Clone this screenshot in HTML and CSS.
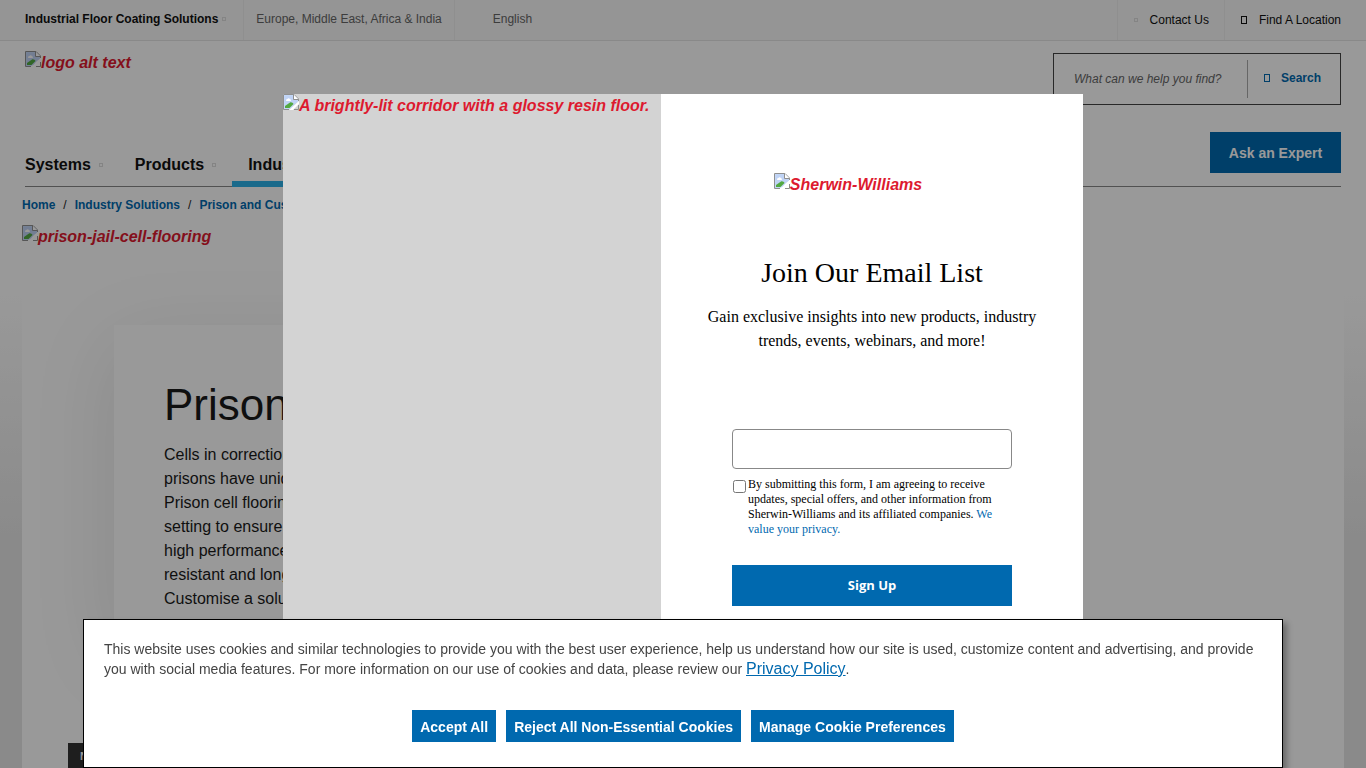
FILE: index.html
```html
<!DOCTYPE html>
<html lang="en">
<head>
  <meta charset="UTF-8">
  <meta name="viewport" content="width=device-width, initial-scale=1.0">
  <title>Prison and Custodial Flooring</title>
  <link rel="stylesheet" href="styles.css">
</head>
<body>
  <!-- Shared missing image icon -->
  <svg class="sprite" aria-hidden="true">
    <symbol id="missing-image" viewBox="0 0 16 16">
      <path d="M1 1H11L15 5V8L11 10L9 14L6 15H1Z" fill="#c3d7f7"/>
      <path d="M2 2H10V6H14V8L9 13H2Z" fill="#c0d3f5"/>
      <path d="M3 6.5C3 5.6 3.6 5 4.4 5C4.8 4 6.6 4 7 5.2C8 5.2 8.4 6.5 7.5 7H3.4Z" fill="#fff"/>
      <path d="M2 14V12L7 8.5C8.5 8 10 9 10.5 10L6.5 14Z" fill="#52a941"/>
      <path d="M0.5 15.5V0.5H11L15.5 5V7" fill="none" stroke="#8f8f8f"/>
      <path d="M10.5 0.5V5.5H15.5" fill="#fff" stroke="#8f8f8f"/>
      <path d="M0.5 15.5H6M11 15.5H15.5V11" fill="none" stroke="#8f8f8f"/>
      <path d="M6 16L16 7V10L10 16Z" fill="#fff"/>
    </symbol>
  </svg>

  <div class="topbar">
    <div class="topbar-group">
      <a href="#" class="topbar-item division">Industrial Floor Coating Solutions <i class="dot"></i></a>
      <a href="#" class="topbar-item region">Europe, Middle East, Africa &amp; India</a>
      <a href="#" class="topbar-item language">English</a>
    </div>
    <div class="topbar-group">
      <a href="#" class="topbar-item contact"><i class="dot"></i>Contact Us</a>
      <a href="#" class="topbar-item location"><i class="box"></i>Find A Location</a>
    </div>
  </div>

  <header class="header">
    <div class="header-row">
      <a href="#" class="alt-image logo"><svg><use href="#missing-image"/></svg>logo alt text</a>
      <form class="search">
        <input type="search" placeholder="What can we help you find?" aria-label="What can we help you find?">
        <button type="submit"><i class="box"></i>Search</button>
      </form>
    </div>
    <div class="nav-row">
      <nav class="nav">
        <a href="#">Systems <i class="dot"></i></a>
        <a href="#">Products <i class="dot"></i></a>
        <a href="#" class="active">Industry Solutions <i class="dot"></i></a>
      </nav>
      <a href="#" class="btn ask">Ask an Expert</a>
    </div>
  </header>

  <nav class="breadcrumb" aria-label="Breadcrumb">
    <a href="#">Home</a><span>/</span><a href="#">Industry Solutions</a><span>/</span><a href="#">Prison and Custodial</a>
  </nav>

  <main class="page">
    <div class="hero">
      <span class="alt-image"><svg><use href="#missing-image"/></svg>prison-jail-cell-flooring</span>
      <section class="card">
        <h1>Prison Flooring</h1>
        <p>
          Cells in correctional facilities<br>
          prisons have unique needs.<br>
          Prison cell flooring must suit the<br>
          setting to ensure safety and<br>
          high performance that is<br>
          resistant and long-lasting.<br>
          Customise a solution.
        </p>
      </section>
    </div>
  </main>

  <button class="side-tab" type="button">N</button>

  <div class="overlay">
    <div class="modal" role="dialog" aria-labelledby="modal-title">
      <div class="modal-picture">
        <span class="alt-image"><svg><use href="#missing-image"/></svg>A brightly-lit corridor with a glossy resin floor.</span>
      </div>
      <form class="modal-form">
        <span class="alt-image"><svg><use href="#missing-image"/></svg>Sherwin-Williams</span>
        <h2 id="modal-title">Join Our Email List</h2>
        <p>Gain exclusive insights into new products, industry trends, events, webinars, and more!</p>
        <div class="fields">
          <input type="email" class="email" aria-label="Email">
          <div class="consent">
            <input type="checkbox" id="consent">
            <label for="consent">By submitting this form, I am agreeing to receive updates, special offers, and other information from Sherwin-Williams and its affiliated companies. <a href="#">We value your privacy.</a></label>
          </div>
          <button type="submit" class="btn signup">Sign Up</button>
        </div>
      </form>
    </div>
  </div>

  <div class="cookies" role="region" aria-label="Cookies">
    <p>This website uses cookies and similar technologies to provide you with the best user experience, help us understand how our site is used, customize content and advertising, and provide you with social media features. For more information on our use of cookies and data, please review our <a href="#">Privacy Policy</a>.</p>
    <div class="cookie-buttons">
      <button type="button" class="btn">Accept All</button>
      <button type="button" class="btn">Reject All Non-Essential Cookies</button>
      <button type="button" class="btn">Manage Cookie Preferences</button>
    </div>
  </div>
</body>
</html>
```
FILE: styles.css
```css
:root {
  --blue: #0069af;
  --light-blue: #2cb1e8;
  --red: #dd1a2f;
  --text: #1a1a1a;
}

* {
  box-sizing: border-box;
}

body {
  margin: 0;
  height: 100vh;
  overflow: hidden;
  display: flex;
  flex-direction: column;
  font-family: "Liberation Sans", Arial, sans-serif;
  font-size: 16px;
  color: var(--text);
  background: #fff;
}

a {
  color: var(--blue);
  text-decoration: none;
}

button,
input {
  font-family: inherit;
}

.sprite {
  position: absolute;
  width: 0;
  height: 0;
}

.alt-image {
  display: flex;
  align-items: flex-start;
  color: var(--red);
  font-weight: 700;
  font-style: italic;
  line-height: 24px;
}

.alt-image svg {
  width: 16px;
  height: 16px;
  flex: none;
}

.btn {
  border: 0;
  background: var(--blue);
  color: #fff;
  font-size: 14px;
  font-weight: 700;
  text-align: center;
  cursor: pointer;
}

/* small markers beside links */
.dot,
.box {
  display: inline-block;
  width: 4px;
  height: 4px;
  border: 1px solid #ddd;
}

.box {
  width: 6px;
  height: 8px;
  border-color: currentColor;
}

/* top bar */
.topbar {
  display: flex;
  justify-content: space-between;
  height: 41px;
  flex: none;
  background: #f8f8f8;
  border-bottom: 1px solid #e4e4e4;
  font-size: 12px;
}

.topbar-group {
  display: flex;
}

.topbar-item {
  display: flex;
  align-items: center;
  color: #111;
  padding: 0 12px;
  border-right: 1px solid #eee;
}

.topbar-group:first-child .topbar-item {
  padding-bottom: 3px;
}

.topbar .division {
  font-weight: 700;
  gap: 4px;
  padding-left: 25px;
  padding-right: 17px;
}

.topbar .region,
.topbar .language {
  color: #666;
}

.topbar .language {
  padding-left: 38px;
  border: 0;
}

.topbar .contact {
  gap: 12px;
  padding: 0 15px 0 16px;
  border-left: 1px solid #eee;
}

.topbar .location {
  gap: 12px;
  padding: 0 25px 0 16px;
  border: 0;
}

/* header */
.header {
  padding: 10px 25px 0;
  flex: none;
}

.header-row,
.nav-row {
  display: flex;
  justify-content: space-between;
}

.search {
  display: flex;
  align-items: center;
  width: 288px;
  height: 52px;
  margin-top: 2px;
  border: 1px solid #444;
}

.search input {
  flex: 1;
  min-width: 0;
  height: 38px;
  padding: 0 0 0 20px;
  border: 0;
  border-right: 1px solid #aaa;
  background: none;
  font-size: 12px;
  font-style: italic;
}

.search input::placeholder {
  color: #666;
}

.search button {
  display: flex;
  align-items: center;
  gap: 11px;
  width: 92px;
  height: 38px;
  padding: 0 0 2px 16px;
  border: 0;
  background: none;
  color: var(--blue);
  font-size: 12px;
  font-weight: 700;
}

.nav-row {
  margin-top: 27px;
  height: 55px;
  border-bottom: 1px solid #888;
}

.nav {
  display: flex;
}

.nav a {
  display: flex;
  align-items: center;
  gap: 8px;
  height: 55px;
  padding: 16px 16px 0;
  border-bottom: 6px solid transparent;
  color: #111;
  font-weight: 700;
}

.nav a:first-child {
  padding-left: 0;
}

.nav a.active {
  border-color: var(--light-blue);
}

.ask {
  width: 131px;
  height: 41px;
  line-height: 42px;
}

.breadcrumb {
  display: flex;
  gap: 8px;
  flex: none;
  padding: 10px 22px 12px;
  font-size: 12px;
  line-height: 16px;
}

.breadcrumb a {
  font-weight: 700;
}

/* page */
.page {
  flex: 1;
  min-height: 0;
  padding: 0 22px;
  background: linear-gradient(#fff 70px, #e6e6e6 320px);
}

.hero {
  height: 100%;
  overflow: hidden;
  background: #fff;
}

.card {
  width: 660px;
  margin: 76px 0 0 92px;
  padding: 52px 50px 30px;
  background: #fff;
  box-shadow: 0 20px 80px rgba(0, 0, 0, 0.1);
}

.card h1 {
  margin: 0 0 11px;
  font-size: 44px;
  font-weight: 400;
  line-height: 55px;
}

.card p {
  margin: 0;
  line-height: 24px;
}

.side-tab {
  position: fixed;
  left: 68px;
  bottom: 0;
  width: 160px;
  height: 25px;
  padding: 0 12px;
  border: 0;
  background: #333;
  color: #fff;
  font-size: 11px;
  font-weight: 700;
  text-align: left;
}

/* email popup */
.overlay {
  position: fixed;
  inset: 0;
  display: flex;
  align-items: center;
  justify-content: center;
  background: rgba(0, 0, 0, 0.4);
}

.modal {
  display: flex;
  width: 800px;
  height: 580px;
  background: #fff;
}

.modal-picture {
  width: 378px;
  background: #d3d3d3;
}

.modal-form {
  flex: 1;
  display: flex;
  flex-direction: column;
  align-items: center;
  padding: 79px 40px 0;
  font-family: "Liberation Serif", "Times New Roman", serif;
  color: #000;
}

.modal-form .alt-image {
  font-family: "Liberation Sans", Arial, sans-serif;
  padding-right: 48px;
}

.modal-form h2 {
  margin: 58px 0 14px;
  font-size: 28px;
  font-weight: 400;
  line-height: 36px;
}

.modal-form p {
  margin: 0;
  line-height: 24px;
  text-align: center;
}

.fields {
  display: flex;
  flex-direction: column;
  width: 280px;
  margin-top: 76px;
}

.email {
  height: 40px;
  padding: 0 12px;
  border: 1px solid #888;
  border-radius: 4px;
}

.consent {
  display: flex;
  align-items: flex-start;
  gap: 2px;
  margin-top: 8px;
  font-size: 12px;
  line-height: 15px;
}

.consent input {
  flex: none;
  width: 13px;
  height: 13px;
  margin: 3px 0 0 1px;
}

.signup {
  height: 41px;
  margin-top: 28px;
  padding: 0 0 2px;
  font-family: "Open Sans", sans-serif;
  font-size: 13px;
}

/* cookie notice */
.cookies {
  position: fixed;
  left: 0;
  right: 0;
  bottom: 0;
  max-width: 1200px;
  margin: 0 auto;
  padding: 19px 20px 25px;
  border: 1px solid #000;
  background: #fff;
  box-shadow: 4px 4px 6px rgba(0, 0, 0, 0.3);
  color: #444;
  font-size: 14px;
}

.cookies p {
  margin: 0;
  line-height: 20px;
}

.cookies p a {
  font-size: 16px;
  text-decoration: underline;
}

.cookie-buttons {
  display: flex;
  justify-content: center;
  gap: 10px;
  margin-top: 31px;
}

.cookie-buttons .btn {
  height: 32px;
  padding: 2px 8px 0;
}
```
